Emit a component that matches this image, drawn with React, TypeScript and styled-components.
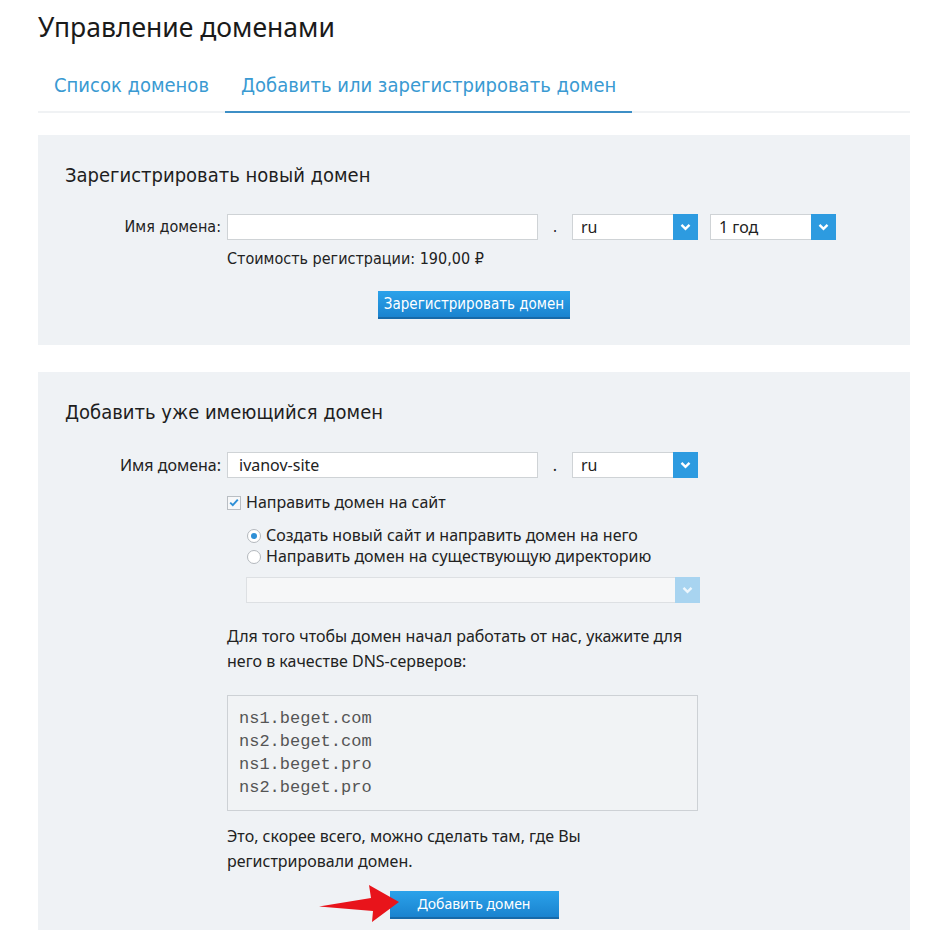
import React from "react";
import styled, { createGlobalStyle } from "styled-components";

const GlobalStyle = createGlobalStyle`
  html, body { margin: 0; padding: 0; background: #fff; }
  body { font-family: "Noto Sans", "Open Sans", sans-serif; color: #222; }
`;

const NARROW = `"Liberation Sans Narrow", "DejaVu Sans Condensed", "Roboto", sans-serif`;
const BODY = `"Noto Sans", "Open Sans", sans-serif`;

const Page = styled.div`
  width: 872px;
  margin-left: 38px;
  padding-top: 11px;
`;

const Title = styled.h1`
  margin: 0;
  font-family: ${BODY};
  font-weight: 400;
  font-size: 26.5px;
  line-height: 32px;
  color: #1a1a1a;
`;

const Tabs = styled.div`
  display: flex;
  margin-top: 23px;
  border-bottom: 2px solid #f0f2f4;
`;

const Tab = styled.div<{ $active?: boolean }>`
  padding: 0 16px;
  height: 45px;
  line-height: 38px;
  font-family: ${NARROW};
  font-size: 20px;
  color: #3a9ad2;
  margin-bottom: -2px;
  border-bottom: 2px solid ${(p) => (p.$active ? "#3d8fc6" : "transparent")};
`;

const Panel = styled.section<{ $narrow?: boolean; $top: number; $bottom: number }>`
  margin-top: ${(p) => p.$top}px;
  background: #eff2f5;
  padding: 28px 27px ${(p) => p.$bottom}px 27px;
  font-family: ${(p) => (p.$narrow ? NARROW : BODY)};
`;

const PanelTitle = styled.h2`
  margin: 0;
  font-family: ${NARROW};
  font-weight: 400;
  font-size: 20px;
  line-height: 24px;
  color: #1e1e1e;
`;

const Form = styled.div<{ $top: number }>`
  display: grid;
  grid-template-columns: 156px 1fr;
  column-gap: 6px;
  margin-top: ${(p) => p.$top}px;
`;

const Label = styled.div`
  text-align: right;
  font-size: 16px;
  line-height: 26px;
  color: #222;
`;

const Field = styled.div`
  display: flex;
  flex-direction: column;
`;

const Row = styled.div`
  display: flex;
  align-items: center;
`;

const TextInput = styled.div`
  box-sizing: border-box;
  width: 311px;
  height: 26px;
  background: #fff;
  border: 1px solid #cfd3d6;
  font-family: ${BODY};
  font-size: 16px;
  line-height: 24px;
  padding-left: 11px;
  color: #222;
`;

const Dot = styled.span`
  width: 34px;
  text-align: center;
  font-size: 16px;
  line-height: 26px;
`;

const SelectBox = styled.div<{ $w: number; $disabled?: boolean }>`
  box-sizing: border-box;
  width: ${(p) => p.$w}px;
  height: 26px;
  display: flex;
  background: ${(p) => (p.$disabled ? "#f6f7f8" : "#fff")};
  border: 1px solid ${(p) => (p.$disabled ? "#dde0e3" : "#cfd3d6")};
  font-family: ${BODY};
  font-size: 16px;
  line-height: 24px;
  color: #222;
`;

const SelectValue = styled.span`
  flex: 1;
  padding-left: 8px;
`;

const SelectArrow = styled.span<{ $disabled?: boolean }>`
  width: 25px;
  margin: -1px -1px -1px 0;
  background: ${(p) => (p.$disabled ? "#a8d4f0" : "#2d9be0")};
  display: flex;
  align-items: center;
  justify-content: center;
`;

const Gap = styled.span<{ $w: number }>`
  width: ${(p) => p.$w}px;
`;

const Cost = styled.div`
  margin-top: 9px;
  font-size: 16px;
  line-height: 20px;
  color: #222;
`;

const ButtonRow = styled.div<{ $top: number }>`
  display: flex;
  justify-content: center;
  margin-top: ${(p) => p.$top}px;
`;

const ButtonAnchor = styled.div`
  position: relative;
`;

const Button = styled.div<{ $w: number; $narrow?: boolean }>`
  box-sizing: border-box;
  width: ${(p) => p.$w}px;
  height: 28px;
  background: linear-gradient(#2ba2ea, #1a83cf);
  border-bottom: 2px solid #1769a8;
  color: #fff;
  text-align: center;
  font-family: ${(p) => (p.$narrow ? NARROW : BODY)};
  font-size: ${(p) => (p.$narrow ? 15 : 14)}px;
  line-height: 26px;
`;

const Check = styled.div<{ $top: number; $indent: number }>`
  display: flex;
  align-items: center;
  height: 21px;
  margin-top: ${(p) => p.$top}px;
  margin-left: ${(p) => p.$indent}px;
  font-size: 16px;
  line-height: 21px;
  color: #222;
`;

const CheckBox = styled.span`
  box-sizing: border-box;
  width: 14px;
  height: 14px;
  border: 1px solid #b9bec3;
  background: #f7f8f9;
  margin-right: 5px;
  display: flex;
  align-items: center;
  justify-content: center;
`;

const Radio = styled.span<{ $on?: boolean }>`
  box-sizing: border-box;
  width: 14px;
  height: 14px;
  border-radius: 50%;
  border: 1px solid #b3b8bd;
  background: #fff;
  margin-right: 5px;
  display: flex;
  align-items: center;
  justify-content: center;
  &::after {
    content: "";
    width: 6px;
    height: 6px;
    border-radius: 50%;
    background: ${(p) => (p.$on ? "#2d8fd6" : "transparent")};
  }
`;

const SubSelect = styled.div`
  margin: 10px 0 0 19px;
`;

const Text = styled.p<{ $top: number }>`
  margin: ${(p) => p.$top}px 0 0 0;
  width: 480px;
  font-size: 16px;
  line-height: 25px;
  color: #222;
`;

const DnsBox = styled.pre`
  box-sizing: border-box;
  margin: 21px 0 0 0;
  width: 471px;
  height: 116px;
  border: 1px solid #cdd1d5;
  background: #f1f3f5;
  padding: 11px 11px;
  font-family: "Liberation Mono", "Courier New", monospace;
  font-size: 17px;
  line-height: 23px;
  color: #555;
`;

const ArrowMark = styled.svg`
  position: absolute;
  left: -71px;
  top: -6px;
`;

const Chevron = ({ light }: { light?: boolean }) => (
  <svg width="11" height="8" viewBox="0 0 11 8">
    <path d="M1.5 1.8 L5.5 5.8 L9.5 1.8" fill="none" stroke={light ? "#eef7fd" : "#fff"} strokeWidth="2.4" />
  </svg>
);

const Select = ({ w, value, disabled }: { w: number; value?: string; disabled?: boolean }) => (
  <SelectBox $w={w} $disabled={disabled}>
    <SelectValue>{value}</SelectValue>
    <SelectArrow $disabled={disabled}>
      <Chevron light={disabled} />
    </SelectArrow>
  </SelectBox>
);

export default function App() {
  return (
    <>
      <GlobalStyle />
      <Page>
        <Title>Управление доменами</Title>
        <Tabs>
          <Tab>Список доменов</Tab>
          <Tab $active>Добавить или зарегистрировать домен</Tab>
        </Tabs>

        <Panel $narrow $top={22} $bottom={26}>
          <PanelTitle>Зарегистрировать новый домен</PanelTitle>
          <Form $top={27}>
            <Label>Имя домена:</Label>
            <Field>
              <Row>
                <TextInput />
                <Dot>.</Dot>
                <Select w={126} value="ru" />
                <Gap $w={12} />
                <Select w={126} value="1 год" />
              </Row>
              <Cost>Стоимость регистрации: 190,00 ₽</Cost>
            </Field>
          </Form>
          <ButtonRow $top={22}>
            <Button $w={192} $narrow>
              Зарегистрировать домен
            </Button>
          </ButtonRow>
        </Panel>

        <Panel $top={27} $bottom={27}>
          <PanelTitle>Добавить уже имеющийся домен</PanelTitle>
          <Form $top={28}>
            <Label>Имя домена:</Label>
            <Field>
              <Row>
                <TextInput>ivanov-site</TextInput>
                <Dot>.</Dot>
                <Select w={126} value="ru" />
              </Row>
              <Check $top={14} $indent={0}>
                <CheckBox>
                  <svg width="10" height="9" viewBox="0 0 10 9">
                    <path d="M1.2 4.6 L3.8 7.2 L8.8 1.6" fill="none" stroke="#2d8fd6" strokeWidth="1.9" />
                  </svg>
                </CheckBox>
                Направить домен на сайт
              </Check>
              <Check $top={12} $indent={20}>
                <Radio $on />
                Создать новый сайт и направить домен на него
              </Check>
              <Check $top={0} $indent={20}>
                <Radio />
                Направить домен на существующую директорию
              </Check>
              <SubSelect>
                <Select w={454} disabled />
              </SubSelect>
              <Text $top={21}>
                Для того чтобы домен начал работать от нас, укажите для него в качестве DNS-серверов:
              </Text>
              <DnsBox>{"ns1.beget.com\nns2.beget.com\nns1.beget.pro\nns2.beget.pro"}</DnsBox>
              <Text $top={13}>Это, скорее всего, можно сделать там, где Вы регистрировали домен.</Text>
            </Field>
          </Form>
          <ButtonRow $top={17}>
            <ButtonAnchor>
              <Button $w={169}>Добавить домен</Button>
              <ArrowMark width="80" height="38" viewBox="0 0 80 38">
                <path d="M0 21.5 L52 13 L50 0 L80 17 L53 37 L54 26 Z" fill="#e8141b" />
              </ArrowMark>
            </ButtonAnchor>
          </ButtonRow>
        </Panel>
      </Page>
    </>
  );
}
